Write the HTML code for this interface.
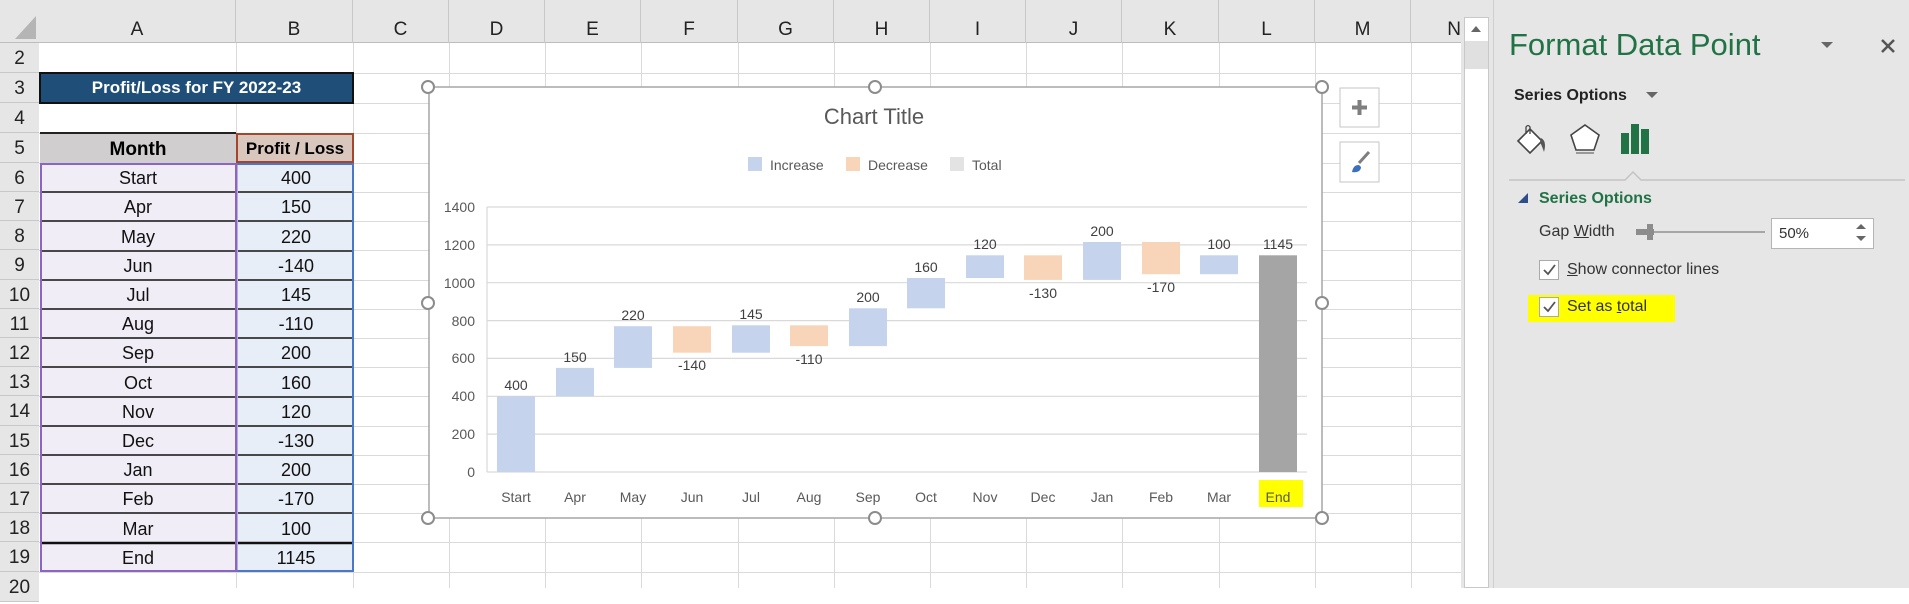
<!DOCTYPE html>
<html><head><meta charset="utf-8"><style>
*{margin:0;padding:0;box-sizing:border-box}
body{width:1909px;height:588px;overflow:hidden;background:#fff;font-family:"Liberation Sans",sans-serif;position:relative}
.a{position:absolute}
.hdr{background:#e6e6e6}
.ch{position:absolute;top:0;height:43px;padding-top:19px;text-align:center;font-size:19px;color:#222;border-right:1px solid #c8c8c8}
.rh{position:absolute;left:0;width:39px;text-align:center;font-size:19px;color:#222;border-bottom:1px solid #c8c8c8;background:#e6e6e6}
</style></head><body>
<!-- grid -->
<svg class="a" style="left:0;top:0" width="1461" height="588">
<g stroke="#dadada" stroke-width="1">
<line x1="39" x2="1461" y1="73.5" y2="73.5"/><line x1="39" x2="1461" y1="103.5" y2="103.5"/><line x1="39" x2="1461" y1="133.5" y2="133.5"/><line x1="39" x2="1461" y1="163.5" y2="163.5"/>
<line x1="39" x2="1461" y1="192.5" y2="192.5"/><line x1="39" x2="1461" y1="221.5" y2="221.5"/><line x1="39" x2="1461" y1="250.5" y2="250.5"/><line x1="39" x2="1461" y1="280.5" y2="280.5"/><line x1="39" x2="1461" y1="309.5" y2="309.5"/><line x1="39" x2="1461" y1="338.5" y2="338.5"/><line x1="39" x2="1461" y1="367.5" y2="367.5"/><line x1="39" x2="1461" y1="396.5" y2="396.5"/><line x1="39" x2="1461" y1="426.5" y2="426.5"/><line x1="39" x2="1461" y1="455.5" y2="455.5"/><line x1="39" x2="1461" y1="484.5" y2="484.5"/><line x1="39" x2="1461" y1="513.5" y2="513.5"/><line x1="39" x2="1461" y1="542.5" y2="542.5"/><line x1="39" x2="1461" y1="572.5" y2="572.5"/>
<line x1="236.5" y1="43" x2="236.5" y2="588"/><line x1="353.5" y1="43" x2="353.5" y2="588"/><line x1="449.5" y1="43" x2="449.5" y2="588"/><line x1="545.5" y1="43" x2="545.5" y2="588"/><line x1="641.5" y1="43" x2="641.5" y2="588"/><line x1="738.5" y1="43" x2="738.5" y2="588"/><line x1="834.5" y1="43" x2="834.5" y2="588"/><line x1="930.5" y1="43" x2="930.5" y2="588"/><line x1="1026.5" y1="43" x2="1026.5" y2="588"/><line x1="1122.5" y1="43" x2="1122.5" y2="588"/><line x1="1219.5" y1="43" x2="1219.5" y2="588"/><line x1="1315.5" y1="43" x2="1315.5" y2="588"/><line x1="1411.5" y1="43" x2="1411.5" y2="588"/>
</g></svg>
<!-- column headers -->
<div class="a hdr" style="left:0;top:0;width:1461px;height:43px;border-bottom:1px solid #bdbdbd"></div>
<svg class="a" style="left:14px;top:16px" width="22" height="23"><polygon points="22,0 22,23 1,23" fill="#b5b5b5"/></svg>
<div class="ch" style="left:39px;width:197px">A</div>
<div class="ch" style="left:236px;width:117px">B</div>
<div class="ch" style="left:353px;width:96px">C</div>
<div class="ch" style="left:449px;width:96px">D</div>
<div class="ch" style="left:545px;width:96px">E</div>
<div class="ch" style="left:641px;width:97px">F</div>
<div class="ch" style="left:738px;width:96px">G</div>
<div class="ch" style="left:834px;width:96px">H</div>
<div class="ch" style="left:930px;width:96px">I</div>
<div class="ch" style="left:1026px;width:96px">J</div>
<div class="ch" style="left:1122px;width:97px">K</div>
<div class="ch" style="left:1219px;width:96px">L</div>
<div class="ch" style="left:1315px;width:96px">M</div>
<div class="ch" style="left:1411px;width:50px;text-align:right;border:none">N</div>
<!-- row headers -->
<div class="a" style="left:0;top:43px;width:39px;height:545px;background:#e6e6e6;border-right:1px solid #bdbdbd"></div>
<div class="rh" style="top:43px;height:30px;line-height:32px">2</div>
<div class="rh" style="top:73px;height:30px;line-height:32px">3</div>
<div class="rh" style="top:103px;height:30px;line-height:32px">4</div>
<div class="rh" style="top:133px;height:30px;line-height:32px">5</div>
<div class="rh" style="top:163px;height:29px;line-height:31px">6</div>
<div class="rh" style="top:192px;height:29px;line-height:31px">7</div>
<div class="rh" style="top:221px;height:29px;line-height:31px">8</div>
<div class="rh" style="top:250px;height:30px;line-height:32px">9</div>
<div class="rh" style="top:280px;height:29px;line-height:31px">10</div>
<div class="rh" style="top:309px;height:29px;line-height:31px">11</div>
<div class="rh" style="top:338px;height:29px;line-height:31px">12</div>
<div class="rh" style="top:367px;height:29px;line-height:31px">13</div>
<div class="rh" style="top:396px;height:30px;line-height:32px">14</div>
<div class="rh" style="top:426px;height:29px;line-height:31px">15</div>
<div class="rh" style="top:455px;height:29px;line-height:31px">16</div>
<div class="rh" style="top:484px;height:29px;line-height:31px">17</div>
<div class="rh" style="top:513px;height:29px;line-height:31px">18</div>
<div class="rh" style="top:542px;height:30px;line-height:32px">19</div>
<div class="rh" style="top:572px;height:30px;line-height:32px">20</div>
<!-- title -->
<div class="a" style="left:39px;top:72px;width:315px;height:32px;background:#1f4e79;border:2px solid #111;color:#fff;font-weight:bold;font-size:17px;text-align:center;line-height:28px">Profit/Loss for FY 2022-23</div>
<div class="a" style="left:40px;top:132px;width:196px;height:31px;background:#d0cece;border-top:2px solid #222;font-weight:bold;font-size:19px;text-align:center;line-height:31px">Month</div>
<div class="a" style="left:236px;top:133px;width:118px;height:30px;background:#d9c6bd;border:2px solid #a5452b;font-weight:bold;font-size:17px;text-align:center;line-height:27px">Profit / Loss</div>
<!-- data -->
<div class="a" style="left:40px;top:163px;width:197px;height:409px;background:#f0edf7;border:2px solid #8a65c2"></div>
<div class="a" style="left:236px;top:163px;width:118px;height:409px;background:#e8eef8;border:2px solid #4a78c8;border-left:none"></div>
<svg class="a" style="left:40px;top:163px" width="314" height="409">
<g stroke="#111" stroke-width="1.5">
<line x1="2" x2="195" y1="29" y2="29"/><line x1="2" x2="195" y1="58" y2="58"/><line x1="2" x2="195" y1="88" y2="88"/><line x1="2" x2="195" y1="117" y2="117"/><line x1="2" x2="195" y1="146" y2="146"/><line x1="2" x2="195" y1="175" y2="175"/><line x1="2" x2="195" y1="204" y2="204"/><line x1="2" x2="195" y1="234" y2="234"/><line x1="2" x2="195" y1="263" y2="263"/><line x1="2" x2="195" y1="292" y2="292"/><line x1="2" x2="195" y1="321" y2="321"/><line x1="2" x2="195" y1="350" y2="350"/><line x1="2" x2="195" y1="380" y2="380" stroke-width="2.5"/>
<line x1="198" x2="312" y1="29" y2="29"/><line x1="198" x2="312" y1="58" y2="58"/><line x1="198" x2="312" y1="88" y2="88"/><line x1="198" x2="312" y1="117" y2="117"/><line x1="198" x2="312" y1="146" y2="146"/><line x1="198" x2="312" y1="175" y2="175"/><line x1="198" x2="312" y1="204" y2="204"/><line x1="198" x2="312" y1="234" y2="234"/><line x1="198" x2="312" y1="263" y2="263"/><line x1="198" x2="312" y1="292" y2="292"/><line x1="198" x2="312" y1="321" y2="321"/><line x1="198" x2="312" y1="350" y2="350"/><line x1="198" x2="312" y1="380" y2="380" stroke-width="2.5"/>
</g>
<line x1="196.5" x2="196.5" y1="0" y2="409" stroke="#8a65c2" stroke-width="2"/>
<g font-family="Liberation Sans" font-size="18" fill="#111" text-anchor="middle">
<text x="98" y="21">Start</text><text x="98" y="50">Apr</text><text x="98" y="80">May</text><text x="98" y="109">Jun</text><text x="98" y="138">Jul</text><text x="98" y="167">Aug</text><text x="98" y="196">Sep</text><text x="98" y="226">Oct</text><text x="98" y="255">Nov</text><text x="98" y="284">Dec</text><text x="98" y="313">Jan</text><text x="98" y="342">Feb</text><text x="98" y="372">Mar</text><text x="98" y="401">End</text>
<text x="256" y="21">400</text><text x="256" y="50">150</text><text x="256" y="80">220</text><text x="256" y="109">-140</text><text x="256" y="138">145</text><text x="256" y="167">-110</text><text x="256" y="196">200</text><text x="256" y="226">160</text><text x="256" y="255">120</text><text x="256" y="284">-130</text><text x="256" y="313">200</text><text x="256" y="342">-170</text><text x="256" y="372">100</text><text x="256" y="401">1145</text>
</g></svg>
<!-- chart -->
<svg class="a" style="left:0;top:0" width="1461" height="588">
<rect x="429" y="87" width="893" height="431" fill="#fff" stroke="#a6a6a6" stroke-width="1.5"/>
<g stroke="#d9d9d9" stroke-width="1.2">
<line x1="487" x2="1307" y1="207" y2="207"/><line x1="487" x2="1307" y1="244.9" y2="244.9"/><line x1="487" x2="1307" y1="282.7" y2="282.7"/><line x1="487" x2="1307" y1="320.6" y2="320.6"/><line x1="487" x2="1307" y1="358.4" y2="358.4"/><line x1="487" x2="1307" y1="396.3" y2="396.3"/><line x1="487" x2="1307" y1="434.1" y2="434.1"/><line x1="487" x2="1307" y1="472" y2="472"/><line x1="487" x2="487" y1="207" y2="472"/>
</g>
<g font-family="Liberation Sans" font-size="14" fill="#595959" text-anchor="end">
<text x="475" y="212">1400</text><text x="475" y="250">1200</text><text x="475" y="288">1000</text><text x="475" y="326">800</text><text x="475" y="363">600</text><text x="475" y="401">400</text><text x="475" y="439">200</text><text x="475" y="477">0</text>
</g>
<text x="874" y="124" font-family="Liberation Sans" font-size="22" fill="#595959" text-anchor="middle">Chart Title</text>
<rect x="748" y="157" width="14" height="14" fill="#c5d3ec"/><text x="770" y="170" font-family="Liberation Sans" font-size="14" fill="#595959">Increase</text>
<rect x="846" y="157" width="14" height="14" fill="#f8d5b8"/><text x="868" y="170" font-family="Liberation Sans" font-size="14" fill="#595959">Decrease</text>
<rect x="950" y="157" width="14" height="14" fill="#e3e3e3"/><text x="972" y="170" font-family="Liberation Sans" font-size="14" fill="#595959">Total</text>
<g fill="#c5d3ec">
<rect x="497" y="396.3" width="38" height="75.7"/><rect x="556" y="367.9" width="38" height="28.4"/><rect x="614" y="326.2" width="38" height="41.7"/>
<rect x="732" y="325.3" width="38" height="27.4"/><rect x="849" y="308.3" width="38" height="37.8"/><rect x="907" y="278" width="38" height="30.3"/>
<rect x="966" y="255.3" width="38" height="22.7"/><rect x="1083" y="242" width="38" height="37.9"/><rect x="1200" y="255.3" width="38" height="18.9"/>
</g>
<g fill="#f8d5b8">
<rect x="673" y="326.2" width="38" height="26.5"/><rect x="790" y="325.3" width="38" height="20.8"/><rect x="1024" y="255.3" width="38" height="24.6"/><rect x="1142" y="242" width="38" height="32.2"/>
</g>
<rect x="1259" y="255.3" width="38" height="216.7" fill="#a5a5a5"/>
<rect x="1259" y="480" width="44" height="27" fill="#ffff00"/>
<g font-family="Liberation Sans" font-size="14" fill="#404040" text-anchor="middle">
<text x="516" y="390">400</text><text x="575" y="362">150</text><text x="633" y="320">220</text><text x="692" y="370">-140</text><text x="751" y="319">145</text><text x="809" y="364">-110</text><text x="868" y="302">200</text><text x="926" y="272">160</text><text x="985" y="249">120</text><text x="1043" y="298">-130</text><text x="1102" y="236">200</text><text x="1161" y="292">-170</text><text x="1219" y="249">100</text><text x="1278" y="249">1145</text>
</g>
<g font-family="Liberation Sans" font-size="14" fill="#595959" text-anchor="middle">
<text x="516" y="502">Start</text><text x="575" y="502">Apr</text><text x="633" y="502">May</text><text x="692" y="502">Jun</text><text x="751" y="502">Jul</text><text x="809" y="502">Aug</text><text x="868" y="502">Sep</text><text x="926" y="502">Oct</text><text x="985" y="502">Nov</text><text x="1043" y="502">Dec</text><text x="1102" y="502">Jan</text><text x="1161" y="502">Feb</text><text x="1219" y="502">Mar</text><text x="1278" y="502">End</text>
</g>
<g fill="#fff" stroke="#8c8c8c" stroke-width="2">
<circle cx="428" cy="87" r="6"/><circle cx="875" cy="87" r="6"/><circle cx="1322" cy="87" r="6"/>
<circle cx="428" cy="303" r="6"/><circle cx="1322" cy="303" r="6"/>
<circle cx="428" cy="518" r="6"/><circle cx="875" cy="518" r="6"/><circle cx="1322" cy="518" r="6"/>
</g>
<rect x="1340" y="88" width="39" height="39" fill="#fff" stroke="#c6c6c6"/>
<path d="M1352 107.5h15M1359.5 100v15" stroke="#7f7f7f" stroke-width="4"/>
<rect x="1340" y="142" width="39" height="40" fill="#fff" stroke="#c6c6c6"/>
<path d="M1369 152l-10 11" stroke="#7f7f7f" stroke-width="3"/><path d="M1352 172c1-5 3-7 7-7l2 2c0 4-4 6-9 5z" fill="#3b6fbf"/>
</svg>
<!-- scrollbar -->
<div class="a" style="left:1461px;top:0;width:32px;height:588px;background:#e6e6e6"></div>
<div class="a" style="left:1464px;top:17px;width:25px;height:571px;background:#fff;border:1px solid #c8c8c8"></div>
<div class="a" style="left:1465px;top:41px;width:23px;height:28px;background:#e0e0e0"></div>
<svg class="a" style="left:1469px;top:24px" width="14" height="10"><polygon points="7,2 12,8 2,8" fill="#666"/></svg>
<!-- pane -->
<div class="a" style="left:1493px;top:0;width:416px;height:588px;background:#e6e6e6;border-left:1px solid #cfcfcf"></div>
<div class="a" style="left:1509px;top:27px;font-size:31px;color:#217346">Format Data Point</div>
<svg class="a" style="left:1820px;top:40px" width="14" height="10"><polygon points="1,2 13,2 7,8" fill="#666"/></svg>
<svg class="a" style="left:1880px;top:38px" width="16" height="16"><path d="M2 2L14 14M14 2L2 14" stroke="#555" stroke-width="2.5"/></svg>
<div class="a" style="left:1514px;top:87px;font-size:16px;font-weight:bold;color:#222">Series Options</div>
<svg class="a" style="left:1645px;top:91px" width="14" height="10"><polygon points="1,1 13,1 7,7" fill="#666"/></svg>
<svg class="a" style="left:1514px;top:122px" width="36" height="36"><path d="M4 19L16 7L28 19L16 31Z" fill="#fff" stroke="#444" stroke-width="1.6"/><path d="M12 12V5q2-3 4 0v7" fill="none" stroke="#444" stroke-width="1.3"/><path d="M27 16q6 3 3 14q-2-6-4-10z" fill="#555"/></svg>
<svg class="a" style="left:1568px;top:122px" width="34" height="36"><path d="M17 3L31 13L26 28H8L3 13Z" fill="#fff" stroke="#444" stroke-width="1.6"/><line x1="8" y1="31" x2="26" y2="31" stroke="#999" stroke-width="2"/></svg>
<svg class="a" style="left:1620px;top:122px" width="32" height="34"><rect x="1" y="11" width="8" height="21" fill="#217346"/><rect x="11" y="2" width="8" height="30" fill="#217346"/><rect x="21" y="7" width="8" height="25" fill="#217346"/></svg>
<svg class="a" style="left:1509px;top:166px" width="396" height="16"><path d="M0 14H116L124 6L132 14H396" fill="none" stroke="#c3c3c3" stroke-width="1.5"/></svg>
<svg class="a" style="left:1517px;top:192px" width="12" height="12"><polygon points="11,1 11,11 1,11" fill="#2c4f8a"/></svg>
<div class="a" style="left:1539px;top:190px;font-size:16px;font-weight:bold;color:#217346">Series Options</div>
<div class="a" style="left:1539px;top:223px;font-size:16px;color:#333">Gap <u>W</u>idth</div>
<div class="a" style="left:1636px;top:231px;width:129px;height:2px;background:#a6a6a6"></div>
<div class="a" style="left:1636px;top:229px;width:18px;height:6px;background:#8c8c8c"></div>
<div class="a" style="left:1647px;top:224px;width:6px;height:16px;background:#8c8c8c"></div>
<div class="a" style="left:1771px;top:218px;width:103px;height:31px;background:#fff;border:1px solid #b5b5b5;font-size:15px;color:#333;padding:6px 0 0 7px">50%</div>
<svg class="a" style="left:1854px;top:222px" width="14" height="22"><polygon points="7,2 12,7 2,7" fill="#666"/><polygon points="2,14 12,14 7,19" fill="#666"/></svg>
<div class="a" style="left:1539px;top:260px;width:20px;height:20px;background:#fff;border:1px solid #aaa"></div>
<svg class="a" style="left:1541px;top:262px" width="16" height="16"><path d="M3 8L7 12L14 3" fill="none" stroke="#555" stroke-width="1.8"/></svg>
<div class="a" style="left:1567px;top:261px;font-size:16px;color:#333"><u>S</u>how connector lines</div>
<div class="a" style="left:1528px;top:295px;width:147px;height:27px;background:#ffff00"></div>
<div class="a" style="left:1539px;top:297px;width:20px;height:20px;background:#fff;border:1px solid #aaa"></div>
<svg class="a" style="left:1541px;top:299px" width="16" height="16"><path d="M3 8L7 12L14 3" fill="none" stroke="#555" stroke-width="1.8"/></svg>
<div class="a" style="left:1567px;top:298px;font-size:16px;color:#333">Set as <u>t</u>otal</div>
</body></html>
